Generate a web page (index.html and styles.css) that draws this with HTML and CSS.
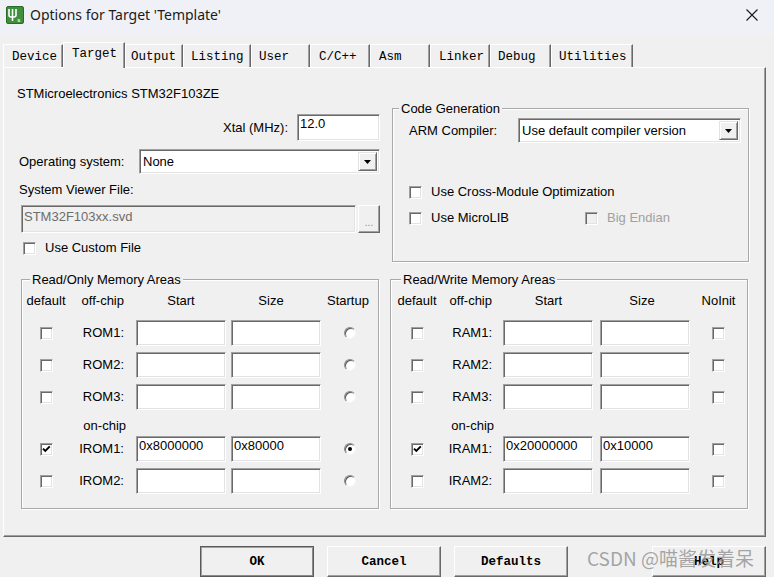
FILE: index.html
```html
<!DOCTYPE html>
<html lang="en">
<head>
<meta charset="utf-8">
<title>Options for Target 'Template'</title>
<link rel="stylesheet" href="styles.css">
</head>
<body>
<header class="titlebar">
  <svg class="app-icon" viewBox="0 0 18 18">
    <rect x="0.5" y="0.5" width="17" height="17" rx="1.5" fill="#3f8f3c" stroke="#2b6b2a"/>
    <path d="M3 3 V9 Q3 11 5 11 H8 Q10 11 10 9 V3 M6.5 3 V11 M6.5 11 V15" stroke="#fff" stroke-width="1.6" fill="none"/>
    <text x="11.2" y="15.8" font-family="Liberation Sans, sans-serif" font-weight="bold" font-size="5.5" fill="#fff">s</text>
  </svg>
  <span class="title">Options for Target 'Template'</span>
  <svg class="close" viewBox="0 0 12 12"><path d="M0.5 0.5 L11.5 11.5 M11.5 0.5 L0.5 11.5" stroke="#1a1a1a" stroke-width="1.1" fill="none"/></svg>
</header>

<div class="content">
  <nav class="tabs">
    <div class="tab">Device</div>
    <div class="tab active">Target</div>
    <div class="tab">Output</div>
    <div class="tab">Listing</div>
    <div class="tab">User</div>
    <div class="tab">C/C++</div>
    <div class="tab">Asm</div>
    <div class="tab">Linker</div>
    <div class="tab">Debug</div>
    <div class="tab">Utilities</div>
  </nav>

  <section class="panel">
    <div class="top">
      <div class="left-col">
        <div class="device">STMicroelectronics STM32F103ZE</div>
        <div class="row xtal">
          <span>Xtal (MHz):</span>
          <div class="edit xtal-edit">12.0</div>
        </div>
        <div class="row os">
          <span>Operating system:</span>
          <div class="combo os-combo">
            <span class="combo-text">None</span>
            <span class="drop"><svg viewBox="0 0 7 4" width="7" height="4"><path d="M0 0 H7 L3.5 4 Z" fill="#000"/></svg></span>
          </div>
        </div>
        <div class="svf-label">System Viewer File:</div>
        <div class="row svf">
          <div class="edit disabled svf-edit">STM32F103xx.svd</div>
          <div class="dots">...</div>
        </div>
        <label class="check custom"><span class="cb"></span>Use Custom File</label>
      </div>

      <div class="group codegen">
        <div class="group-title">Code Generation</div>
        <div class="row arm">
          <span>ARM Compiler:</span>
          <div class="combo arm-combo">
            <span class="combo-text">Use default compiler version</span>
            <span class="drop"><svg viewBox="0 0 7 4" width="7" height="4"><path d="M0 0 H7 L3.5 4 Z" fill="#000"/></svg></span>
          </div>
        </div>
        <label class="check opt1"><span class="cb"></span>Use Cross-Module Optimization</label>
        <div class="opt2">
          <label class="check item-micro"><span class="cb"></span>Use MicroLIB</label>
          <label class="check disabled-text"><span class="cb cb-disabled"></span>Big Endian</label>
        </div>
      </div>
    </div>

    <div class="mem">
      <div class="group mem-group ro">
        <div class="group-title">Read/Only Memory Areas</div>
        <div class="mem-head">
          <span class="h-default">default</span>
          <span class="h-chip">off-chip</span>
          <span class="h-start">Start</span>
          <span class="h-size">Size</span>
          <span class="h-last">Startup</span>
        </div>
        <div class="mem-grid">
          <span class="cb"></span><span class="lbl">ROM1:</span><span class="edit"></span><span class="edit"></span><span class="radio"></span>
          <span class="cb"></span><span class="lbl">ROM2:</span><span class="edit"></span><span class="edit"></span><span class="radio"></span>
          <span class="cb"></span><span class="lbl">ROM3:</span><span class="edit"></span><span class="edit"></span><span class="radio"></span>
          <span></span><span class="onchip">on-chip</span><span></span><span></span><span></span>
          <span class="cb"><svg viewBox="0 0 11 11"><path d="M2 4.6 L4.3 7 L8.8 2.4" stroke="#000" stroke-width="1.9" fill="none"/></svg></span><span class="lbl">IROM1:</span><span class="edit">0x8000000</span><span class="edit">0x80000</span><span class="radio on"></span>
          <span class="cb"></span><span class="lbl">IROM2:</span><span class="edit"></span><span class="edit"></span><span class="radio"></span>
        </div>
      </div>

      <div class="group mem-group rw">
        <div class="group-title">Read/Write Memory Areas</div>
        <div class="mem-head">
          <span class="h-default">default</span>
          <span class="h-chip">off-chip</span>
          <span class="h-start">Start</span>
          <span class="h-size">Size</span>
          <span class="h-last">NoInit</span>
        </div>
        <div class="mem-grid">
          <span class="cb"></span><span class="lbl">RAM1:</span><span class="edit"></span><span class="edit"></span><span class="cb"></span>
          <span class="cb"></span><span class="lbl">RAM2:</span><span class="edit"></span><span class="edit"></span><span class="cb"></span>
          <span class="cb"></span><span class="lbl">RAM3:</span><span class="edit"></span><span class="edit"></span><span class="cb"></span>
          <span></span><span class="onchip">on-chip</span><span></span><span></span><span></span>
          <span class="cb"><svg viewBox="0 0 11 11"><path d="M2 4.6 L4.3 7 L8.8 2.4" stroke="#000" stroke-width="1.9" fill="none"/></svg></span><span class="lbl">IRAM1:</span><span class="edit">0x20000000</span><span class="edit">0x10000</span><span class="cb"></span>
          <span class="cb"></span><span class="lbl">IRAM2:</span><span class="edit"></span><span class="edit"></span><span class="cb"></span>
        </div>
      </div>
    </div>
  </section>

  <div class="buttons">
    <div class="btn default">OK</div>
    <div class="btn">Cancel</div>
    <div class="btn">Defaults</div>
    <div class="btn help">Help</div>
  </div>
</div>

<div class="watermark">CSDN @喵酱发着呆</div>
</body>
</html>
```

FILE: styles.css
```css
* { box-sizing: border-box; }

html, body { margin: 0; }

body {
  width: 774px;
  height: 577px;
  overflow: hidden;
  position: relative;
  background: #f0f0f0;
  font-family: "Liberation Sans", Arial, sans-serif;
  font-size: 13px;
  color: #000;
}

/* ---------- title bar ---------- */
.titlebar {
  height: 35px;
  background: #eff1f6;
  display: flex;
  align-items: flex-start;
  padding: 6px 16px 0 6px;
}
.app-icon { width: 18px; height: 18px; flex: none; }
.title {
  margin-left: 6px;
  font-family: "Noto Sans", "Liberation Sans", sans-serif;
  font-size: 14px;
  line-height: 18px;
  color: #1b1b1b;
}
.close { margin-left: auto; margin-top: 3px; width: 12px; height: 12px; }

/* ---------- tabs ---------- */
.content { padding-left: 3px; }

.tabs {
  display: flex;
  align-items: flex-end;
  height: 25px;
  margin-top: 7px;
}
.tab {
  height: 23px;
  padding: 5px 0 0 7px;
  border-top: 1px solid #fff;
  border-left: 1px solid #fff;
  border-right: 1px solid #696969;
  box-shadow: inset -1px 0 #a0a0a0;
  background: #f0f0f0;
  font-family: "Liberation Mono", monospace;
  font-size: 12.5px;
  line-height: 15px;
  white-space: nowrap;
}
.tab.active {
  height: 26px;
  margin-bottom: -1px;
  padding-top: 4px;
  position: relative;
  z-index: 1;
}
.tab:nth-child(1) { width: 60px; padding-left: 8px; }
.tab:nth-child(2) { width: 62px; padding-left: 8px; }
.tab:nth-child(3) { width: 58px; padding-left: 5px; }
.tab:nth-child(4) { width: 68px; }
.tab:nth-child(5) { width: 59px; }
.tab:nth-child(6) { width: 60px; padding-left: 8px; }
.tab:nth-child(7) { width: 60px; padding-left: 8px; }
.tab:nth-child(8) { width: 60px; padding-left: 8px; }
.tab:nth-child(9) { width: 61px; }
.tab:nth-child(10) { width: 82px; }

/* ---------- panel ---------- */
.panel {
  width: 763px;
  height: 470px;
  border: 1px solid;
  border-color: #fff #696969 #696969 #fff;
  box-shadow: inset -1px -1px #a0a0a0;
  padding: 18px 0 0 13px;
}

.top {
  display: grid;
  grid-template-columns: 364px 357px;
  column-gap: 11px;
  align-items: start;
}

.device { line-height: 16px; }

.row { display: flex; align-items: center; }

.xtal {
  margin-top: 12px;
  height: 27px;
  justify-content: flex-end;
  gap: 9px;
  padding-right: 1px;
}
.os {
  margin-top: 8px;
  height: 25px;
  padding: 0 1px 0 2px;
  justify-content: space-between;
}
.svf-label { margin-top: 8px; line-height: 16px; padding-left: 2px; }
.svf { margin-top: 7px; height: 28px; padding-left: 4px; gap: 2px; }

/* ---------- controls ---------- */
.edit {
  display: block;
  background: #fff;
  border: 1px solid;
  border-color: #a0a0a0 #fff #fff #a0a0a0;
  box-shadow: inset 1px 1px #696969, inset -1px -1px #e3e3e3;
  padding: 1px 2px;
  line-height: 16px;
  white-space: nowrap;
  overflow: hidden;
}
.xtal-edit { width: 83px; height: 27px; }
.svf-edit { width: 335px; height: 28px; padding-top: 3px; }
.edit.disabled { background: #f0f0f0; color: #6d6d6d; }

.dots {
  width: 22px;
  height: 28px;
  background: #f0f0f0;
  border: 1px solid;
  border-color: #fff #696969 #696969 #fff;
  box-shadow: inset -1px -1px #a0a0a0;
  color: #8a8a8a;
  font-size: 10px;
  line-height: 10px;
  display: flex;
  align-items: flex-end;
  justify-content: center;
  padding-bottom: 4px;
}

.combo {
  display: flex;
  align-items: stretch;
  height: 25px;
  background: #fff;
  border: 1px solid;
  border-color: #a0a0a0 #fff #fff #a0a0a0;
  box-shadow: inset 1px 1px #696969, inset -1px -1px #e3e3e3;
  padding: 2px;
}
.combo-text {
  flex: 1;
  padding-left: 1px;
  line-height: 20px;
  white-space: nowrap;
}
.drop {
  width: 19px;
  background: #f0f0f0;
  border: 1px solid;
  border-color: #e3e3e3 #696969 #696969 #e3e3e3;
  box-shadow: inset 1px 1px #fff, inset -1px -1px #a0a0a0;
  display: flex;
  align-items: center;
  justify-content: center;
}
.drop svg { display: block; }
.os-combo { width: 241px; }
.arm-combo { width: 223px; }

.check {
  display: flex;
  align-items: center;
  gap: 9px;
  line-height: 16px;
}
.cb {
  display: block;
  flex: none;
  width: 13px;
  height: 13px;
  background: #fff;
  border: 1px solid;
  border-color: #a0a0a0 #fff #fff #a0a0a0;
  box-shadow: inset 1px 1px #696969, inset -1px -1px #e3e3e3;
}
.cb svg { display: block; width: 11px; height: 11px; }
.cb-disabled { background: #f0f0f0; }
.disabled-text { color: #a0a0a0; }

.radio {
  display: block;
  width: 12px;
  height: 12px;
  border-radius: 50%;
  background: #fff;
  border: 1px solid;
  border-color: #8a8a8a #f4f4f4 #f4f4f4 #8a8a8a;
  box-shadow: inset 1px 1px #5a5a5a;
}
.radio.on::after {
  content: "";
  display: block;
  width: 4px;
  height: 4px;
  margin: 3px;
  border-radius: 50%;
  background: #000;
}

.custom { margin-top: 7px; padding-left: 6px; }

/* ---------- group boxes ---------- */
.group {
  border: 1px solid #a9a9a9;
  box-shadow: inset 1px 1px #fff, 1px 1px #fff;
}
.group-title {
  width: max-content;
  margin: -8px 0 0 6px;
  padding: 0 2px;
  line-height: 16px;
  background: #f0f0f0;
}

.codegen { margin-top: 22px; height: 154px; }
.arm {
  margin-top: 1px;
  height: 25px;
  padding: 0 7px 0 16px;
  justify-content: space-between;
}
.opt1 { margin-top: 41px; padding-left: 16px; }
.opt2 { margin-top: 10px; padding-left: 16px; display: flex; }
.item-micro { width: 176px; }

/* ---------- memory areas ---------- */
.mem {
  margin-top: 17px;
  margin-left: 4px;
  display: grid;
  grid-template-columns: 358px 358px;
  column-gap: 11px;
}
.mem-group { height: 230px; }
.ro { padding-left: 2px; }
.rw { padding-left: 4px; }

.mem-head, .mem-grid { display: grid; }
.ro .mem-head, .ro .mem-grid { grid-template-columns: 44px 58px 100px 95px 57px; }
.rw .mem-head, .rw .mem-grid { grid-template-columns: 44px 55px 99px 97px 57px; }

.mem-head { margin-top: 5px; line-height: 16px; white-space: nowrap; }
.h-default { text-align: center; }
.h-chip { text-align: right; padding-right: 2px; }
.h-start { text-align: center; padding-left: 10px; }
.h-size { text-align: center; }
.ro .h-size { padding: 0 10px 0 5px; }
.rw .h-size { padding: 0 6px 0 7px; }
.h-last { text-align: center; }
.ro .h-last { padding-right: 3px; }

.mem-grid {
  margin-top: 11px;
  grid-template-rows: 26px 26px 26px 14px 26px 26px;
  row-gap: 6px;
  align-items: center;
}
.mem-grid .cb, .mem-grid .radio { justify-self: center; }
.mem-grid .lbl { text-align: right; padding-right: 2px; line-height: 16px; }
.mem-grid .edit { width: 90px; height: 26px; justify-self: end; }
.onchip {
  align-self: start;
  margin-top: 2px;
  line-height: 16px;
  text-align: right;
}

/* ---------- buttons ---------- */
.buttons {
  display: flex;
  justify-content: flex-end;
  gap: 13px;
  margin-top: 9px;
  padding-right: 8px;
}
.btn {
  width: 114px;
  height: 31px;
  background: #f0f0f0;
  border: 1px solid;
  border-color: #fff #696969 #696969 #fff;
  box-shadow: inset -1px -1px #a0a0a0;
  font-family: "Liberation Mono", monospace;
  font-size: 12.5px;
  font-weight: bold;
  display: flex;
  align-items: center;
  justify-content: center;
}
.btn.default {
  border-color: #5a5a5a;
  box-shadow: inset 1px 1px #a0a0a0, inset -1px -1px #8a8a8a;
}
.help { margin-left: 71px; }

/* ---------- watermark overlay ---------- */
.watermark {
  position: absolute;
  left: 587px;
  top: 546px;
  font-family: "Noto Sans CJK SC", "Noto Sans", sans-serif;
  font-size: 19px;
  line-height: 24px;
  color: rgba(150, 150, 150, 0.85);
  white-space: nowrap;
}
```
